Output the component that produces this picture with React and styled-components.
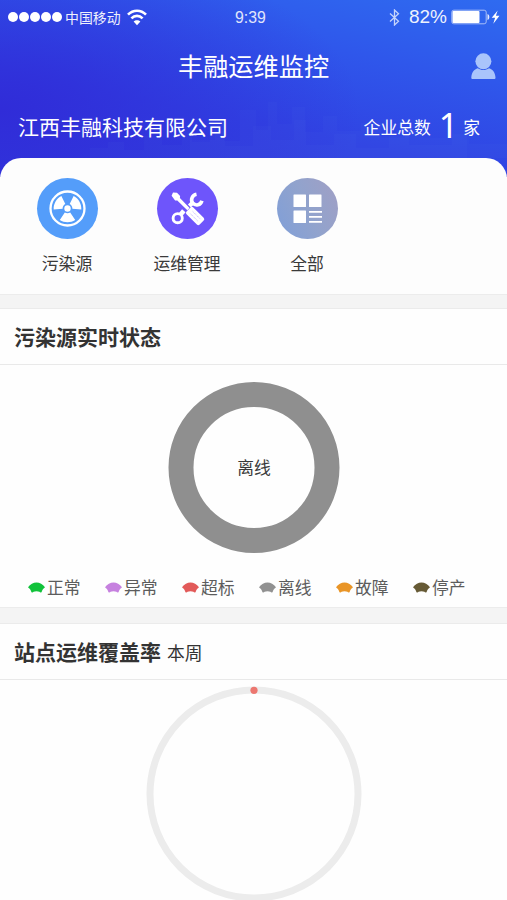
import styled, { createGlobalStyle } from "styled-components";

const GlobalStyle = createGlobalStyle`
  * {
    box-sizing: border-box;
  }
  body {
    margin: 0;
    background: #fefefe;
    font-family: "Noto Sans CJK SC", sans-serif;
    color: #3a3a3a;
  }
`;

const PageWrapper = styled.div`
  width: 100%;
  height: 900px;
  overflow: hidden;
`;

const Header = styled.header`
  position: relative;
  height: 177px;
  color: #fff;
  background: radial-gradient(ellipse 360px 170px at 0% 62%, #302cd8 0%, rgba(48, 44, 216, 0.5) 45%, rgba(48, 44, 216, 0) 100%),
    linear-gradient(192deg, #2f6bf0 0%, #2f57eb 30%, #3043e3 62%, #3137dc 100%);
`;

const Skyline = styled.svg`
  position: absolute;
  left: 0;
  bottom: 19px;
  width: 100%;
  height: 60px;
`;

const HeaderContent = styled.div`
  position: relative;
`;

const StatusBar = styled.div`
  display: grid;
  grid-template-columns: 227px auto 1fr;
  align-items: center;
  height: 34px;
  padding: 0 6px 0 8px;
`;

const StatusGroup = styled.div`
  display: flex;
  align-items: center;
  justify-content: ${({ $end }) => ($end ? "flex-end" : "flex-start")};
`;

const SignalDots = styled.div`
  display: flex;
  gap: 1px;
  margin-right: 3px;
`;

const SignalDot = styled.i`
  width: 10px;
  height: 10px;
  border-radius: 50%;
  background: #fff;
`;

const Carrier = styled.span`
  margin-right: 6px;
  font-size: 13.9px;
  line-height: 20px;
  opacity: 0.92;
`;

const Clock = styled.span`
  padding-top: 2px;
  font-family: "Liberation Sans", sans-serif;
  font-size: 15.8px;
  opacity: 0.85;
`;

const BatteryText = styled.span`
  margin: 0 4px 0 9px;
  font-family: "Liberation Sans", sans-serif;
  font-size: 19px;
  line-height: 20px;
  opacity: 0.92;
`;

const TitleBar = styled.div`
  display: grid;
  grid-template-columns: 36px 1fr 36px;
  align-items: center;
  height: 64px;
`;

const PageTitle = styled.h1`
  grid-column: 2;
  margin: -2px 0 0;
  font-size: 25.2px;
  font-weight: 400;
  line-height: 36px;
  text-align: center;
`;

const CompanyRow = styled.div`
  display: flex;
  align-items: center;
  justify-content: space-between;
  height: 56px;
  padding: 0 27px 0 18px;
`;

const CompanyName = styled.span`
  font-size: 21px;
`;

const CompanyTotal = styled.div`
  display: flex;
  align-items: center;
  padding-top: 2px;
  font-size: 16.8px;

  strong {
    margin: -4px 5px 0 8px;
    font-family: "Noto Sans", sans-serif;
    font-size: 34px;
    font-weight: 400;
    line-height: 40px;
  }
`;

const MenuPanel = styled.nav`
  position: relative;
  display: flex;
  height: 136px;
  margin-top: -19px;
  padding: 20px 0 0 7px;
  background: #fdfdfd;
  border-radius: 21px 21px 0 0;
`;

const MenuItem = styled.div`
  display: flex;
  flex-direction: column;
  align-items: center;
  width: 120px;
  font-size: 16.8px;
  line-height: 24px;
`;

const MenuIcon = styled.div`
  width: 61px;
  height: 61px;
  margin-bottom: 12px;
  border-radius: 50%;
  background: ${({ $bg }) => $bg};

  svg {
    display: block;
  }
`;

const Divider = styled.div`
  height: ${({ $height }) => $height}px;
  background: #f4f4f4;
  border-top: 1px solid #ececec;
  border-bottom: 1px solid #ebebeb;
`;

const Section = styled.section`
  height: ${({ $height }) => $height}px;
  background: #fefefe;
`;

const SectionTitle = styled.h2`
  display: flex;
  align-items: center;
  height: 56px;
  margin: 0;
  padding: 0 14px 2px;
  border-bottom: 1px solid #e9e9e9;
  color: #333;
  font-size: 21px;
  font-weight: 700;

  small {
    margin: 2px 0 0 6px;
    font-size: 17.8px;
    font-weight: 400;
  }
`;

const DonutChart = styled.div`
  display: flex;
  align-items: center;
  justify-content: center;
  width: 171px;
  height: 171px;
  margin: 17px auto 0;
  padding-bottom: 2px;
  transform: translateX(0.5px);
  border: 25px solid #8f8f8f;
  border-radius: 50%;
  font-size: 16.8px;
`;

const Legend = styled.div`
  display: flex;
  margin-top: 21px;
  padding-left: 28px;
`;

const LegendItem = styled.div`
  display: flex;
  align-items: center;
  gap: 2px;
  width: 77px;
  color: #5c5c5c;
  font-size: 16.8px;
  line-height: 26px;
`;

const RateChart = styled.svg`
  display: block;
  margin: 6px auto 0;
`;

const statusList = [
  { name: "正常", color: "#11c23a" },
  { name: "异常", color: "#c681df" },
  { name: "超标", color: "#e25a59" },
  { name: "离线", color: "#919191" },
  { name: "故障", color: "#e99527" },
  { name: "停产", color: "#665a35" },
];

function WifiIcon() {
  return (
    <svg width="20" height="17" viewBox="0 0 20 17" fill="none" stroke="#fff" strokeWidth="2.6">
      <path d="M1 5.7C6 .5 14 .5 19 5.7" />
      <path d="M4.4 9.3c3.2-3.2 8-3.2 11.2 0" />
      <path d="M10 16.2 6.6 12.6c1.9-1.8 4.9-1.8 6.8 0Z" fill="#fff" stroke="none" />
    </svg>
  );
}

function BluetoothIcon() {
  return (
    <svg width="11" height="17" viewBox="0 0 11 17" fill="none" stroke="#c6d4fb" strokeWidth="1.3">
      <path d="M1 4.5 9.5 12.2 5.5 16V1l4 3.8L1 12.5" />
    </svg>
  );
}

function BatteryIcon() {
  return (
    <svg width="50" height="16" viewBox="0 0 50 16">
      <rect x=".8" y="1.2" width="34.4" height="13.6" rx="2" fill="none" stroke="#a9bff8" strokeWidth="1" />
      <rect x="1.5" y="2" width="27" height="12" rx="1" fill="#fff" />
      <path d="M36.5 5c2.4.5 2.4 5.5 0 6Z" fill="#e5ebff" />
      <path d="m46.7 1.5-6 7.3h3.4l-1.8 6 6.2-8.1h-3.6Z" fill="#fff" />
    </svg>
  );
}

function UserIcon() {
  return (
    <svg width="25" height="27" viewBox="0 0 25 27" fill="#a9c4fb">
      <circle cx="12.4" cy="8.3" r="8" />
      <path d="M.3 24.5C.8 19.3 3 16.4 6.8 15.3c3.5 2.4 7.7 2.4 11.2 0 3.8 1.1 6 4 6.5 9.2.1 1-.5 1.6-1.5 1.6H1.8C.8 26.1.2 25.5.3 24.5Z" />
    </svg>
  );
}

function RadiationIcon() {
  return (
    <svg width="61" height="61" viewBox="0 0 61 61" fill="#fff">
      <circle cx="30.5" cy="30.5" r="17" fill="none" stroke="#fff" strokeWidth="2.3" />
      <circle cx="30.5" cy="30.5" r="3.2" />
      {[0, 120, 240].map((angle) => (
        <path
          key={angle}
          transform={`rotate(${angle} 30.5 30.5)`}
          d="m27.8 34.6-5 7.4c4.5 3 10.9 3 15.4 0l-5-7.4c-1.6 1-3.8 1-5.4 0Z"
        />
      ))}
    </svg>
  );
}

function ToolsIcon() {
  return (
    <svg width="61" height="61" viewBox="0 0 61 61">
      {/* 扳手 */}
      <g fill="none" stroke="#fff">
        <circle cx="20.7" cy="40.2" r="4.6" strokeWidth="2.9" />
        <path d="m23.8 36.4 3-3.6" strokeWidth="4.6" />
        <path d="m32.4 28 3-3" strokeWidth="4.2" />
        <path d="M39.5 16.3c-4.2.8-6.3 5.4-3.8 8.8 3 3.2 8 2.2 9.2-2.3" strokeWidth="3.6" />
      </g>
      {/* 螺丝刀 */}
      <path d="m14.6 17.8 1.4-3.4 4 .3 3.1 3.2-.2 2 9.7 10.1-2.3 2.3-10-9.9-2.2.1Z" fill="#fff" />
      <rect x="28.8" y="33.2" width="18.6" height="9.6" rx="2" transform="rotate(45 38.1 38)" fill="#fff" />
      <path
        d="m33.4 35.7 7.8 7.8m-5.5-10.1 7.8 7.8"
        stroke="#b5a5ff"
        strokeWidth=".9"
        strokeDasharray="1.2 1"
      />
    </svg>
  );
}

function AllIcon() {
  return (
    <svg width="61" height="61" viewBox="0 0 61 61" fill="#fff">
      <rect x="16.5" y="16.5" width="12.5" height="12.5" rx=".5" />
      <rect x="32" y="16.5" width="12.5" height="12.5" rx=".5" />
      <rect x="16.5" y="32.5" width="12.5" height="12.5" rx=".5" />
      <path d="M32 33h13v1.8H32zM32 38h13v1.8H32zM32 43h13v1.8H32z" />
    </svg>
  );
}

function SectorIcon({ color }) {
  return (
    <svg width="17" height="13" viewBox="0 0 17 13" fill={color}>
      <path d="M0 6.2C4.4-.1 12.6-.1 17 6.2c-1.4 1.4-2.7 2.2-3.2 4.2-.2 1.4-1.6 1.4-2.4.4-1.5-.9-4.3-.9-5.8 0-.8 1-2.2 1-2.4-.4C2.7 8.4 1.4 7.6 0 6.2Z" />
    </svg>
  );
}

const menus = [
  { name: "污染源", bg: "#549dfa", Icon: RadiationIcon },
  { name: "运维管理", bg: "#6e55fb", Icon: ToolsIcon },
  { name: "全部", bg: "linear-gradient(65deg, #819fd7 5%, #91a3cd 50%, #a19fc4 100%)", Icon: AllIcon },
];

export default function App() {
  return (
    <PageWrapper>
      <GlobalStyle />
      <Header>
        {/* 背景城市轮廓 */}
        <Skyline viewBox="0 0 507 60" preserveAspectRatio="none" fill="#5c86f5">
          <path
            opacity=".05"
            d="M90 60V50h18v-6h16v8h20V38h18v9h20V29h10v15h18V22h14v21h16V12h16v20h12V4h9v22h15V9h13v25h18V18h14v15h24V25h20v15h24V28h18v12h28V32h18v14h38v14Z"
          />
          <path opacity=".05" d="M190 60V42h25v-9h10v15h28V28h18v14h23V22h12v25h28V36h22v14h33V38h20v9h43V36h15v24Z" />
        </Skyline>
        <HeaderContent>
          <StatusBar>
            <StatusGroup>
              <SignalDots>
                {[0, 1, 2, 3, 4].map((i) => (
                  <SignalDot key={i} />
                ))}
              </SignalDots>
              <Carrier>中国移动</Carrier>
              <WifiIcon />
            </StatusGroup>
            <Clock>9:39</Clock>
            <StatusGroup $end>
              <BluetoothIcon />
              <BatteryText>82%</BatteryText>
              <BatteryIcon />
            </StatusGroup>
          </StatusBar>
          <TitleBar>
            <PageTitle>丰融运维监控</PageTitle>
            <UserIcon />
          </TitleBar>
          <CompanyRow>
            <CompanyName>江西丰融科技有限公司</CompanyName>
            <CompanyTotal>
              企业总数<strong>1</strong>家
            </CompanyTotal>
          </CompanyRow>
        </HeaderContent>
      </Header>

      <MenuPanel>
        {menus.map(({ name, bg, Icon }) => (
          <MenuItem key={name}>
            <MenuIcon $bg={bg}>
              <Icon />
            </MenuIcon>
            {name}
          </MenuItem>
        ))}
      </MenuPanel>

      <Divider $height={15} />

      <Section $height={298}>
        <SectionTitle>污染源实时状态</SectionTitle>
        <DonutChart>离线</DonutChart>
        <Legend>
          {statusList.map((status) => (
            <LegendItem key={status.name}>
              <SectorIcon color={status.color} />
              {status.name}
            </LegendItem>
          ))}
        </Legend>
      </Section>

      <Divider $height={17} />

      <Section $height={277}>
        <SectionTitle>
          站点运维覆盖率<small>本周</small>
        </SectionTitle>
        <RateChart width="216" height="216" viewBox="0 0 216 216">
          <circle cx="108" cy="108" r="104" fill="none" stroke="#ececec" strokeWidth="7" />
          <circle cx="108" cy="4.3" r="3.6" fill="#ec7770" />
        </RateChart>
      </Section>
    </PageWrapper>
  );
}
